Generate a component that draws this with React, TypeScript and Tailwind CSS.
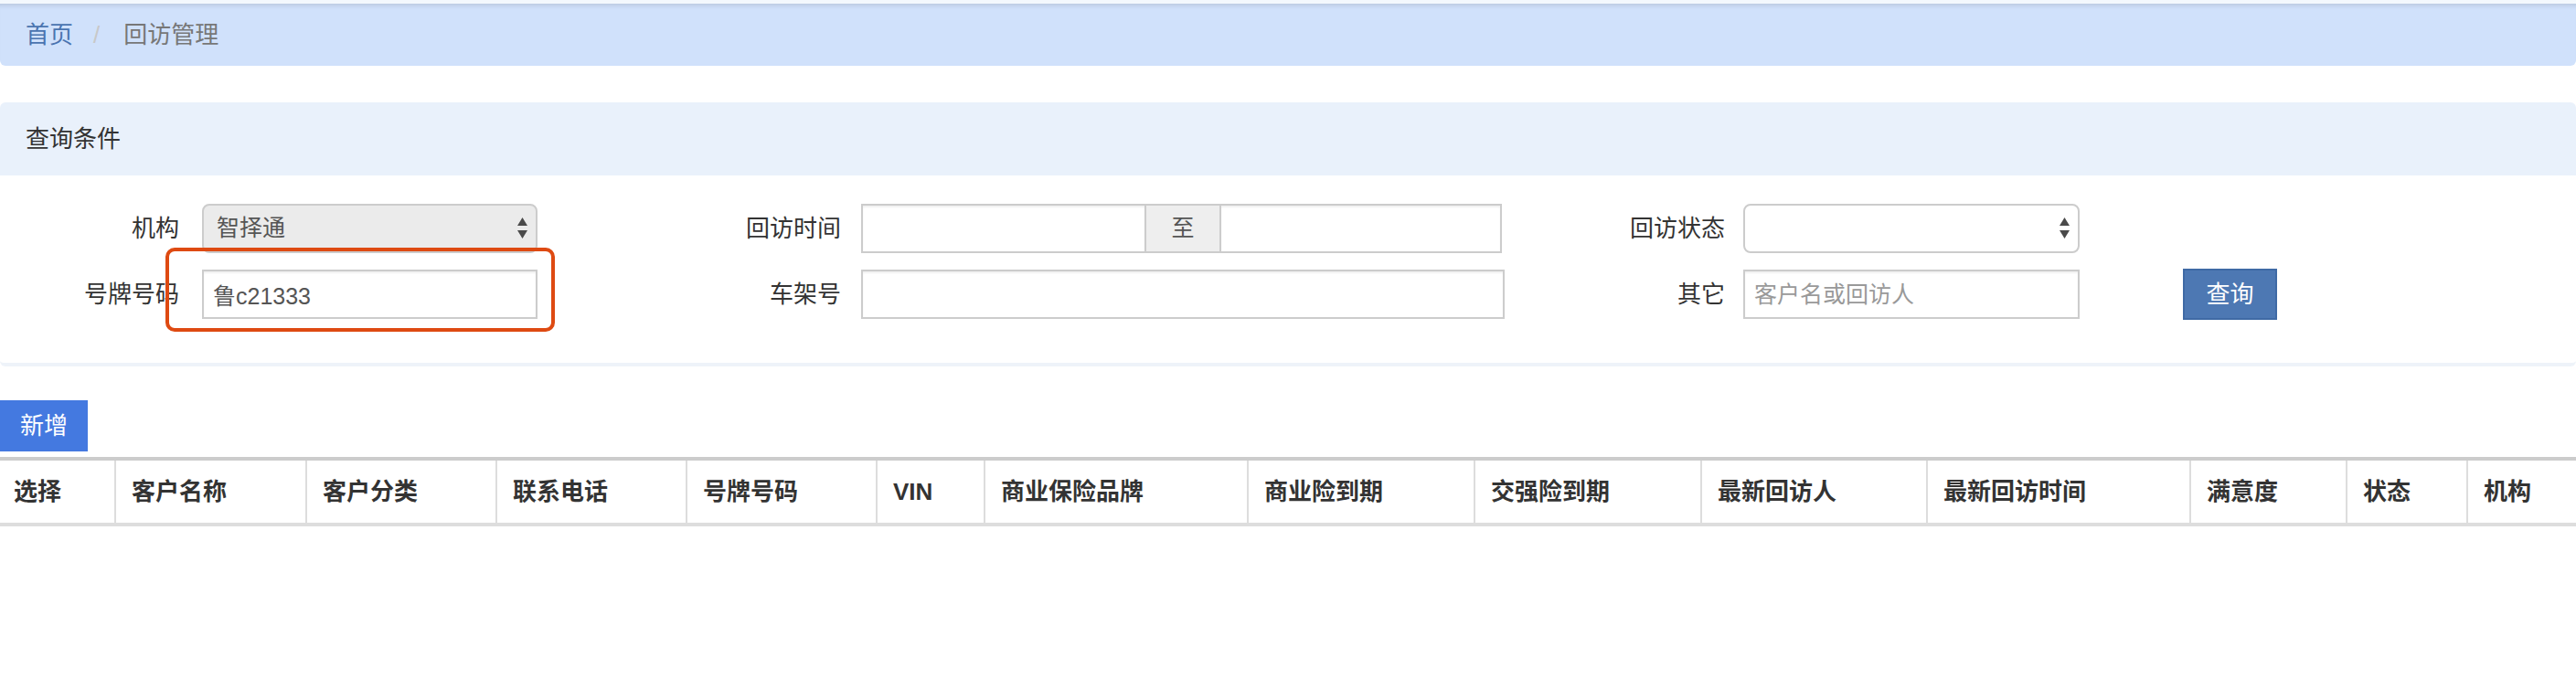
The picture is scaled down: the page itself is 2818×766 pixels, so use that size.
import React from 'react';

const font = { fontFamily: '"Liberation Sans", "Noto Sans CJK SC", sans-serif' };

const columns = [
  { label: '选择', w: 'w-[126px]', pl: 'pl-[15px]' },
  { label: '客户名称', w: 'w-[209px]', pl: 'pl-[17px]' },
  { label: '客户分类', w: 'w-[208px]', pl: 'pl-[17px]' },
  { label: '联系电话', w: 'w-[208px]', pl: 'pl-[17px]' },
  { label: '号牌号码', w: 'w-[208px]', pl: 'pl-[17px]' },
  { label: 'VIN', w: 'w-[118px]', pl: 'pl-[17px]' },
  { label: '商业保险品牌', w: 'w-[288px]', pl: 'pl-[17px]' },
  { label: '商业险到期', w: 'w-[248px]', pl: 'pl-[17px]' },
  { label: '交强险到期', w: 'w-[248px]', pl: 'pl-[17px]' },
  { label: '最新回访人', w: 'w-[247px]', pl: 'pl-[17px]' },
  { label: '最新回访时间', w: 'w-[288px]', pl: 'pl-[17px]' },
  { label: '满意度', w: 'w-[171px]', pl: 'pl-[17px]' },
  { label: '状态', w: 'w-[132px]', pl: 'pl-[17px]' },
  { label: '机构', w: 'w-[119px]', pl: 'pl-[17px]' },
];

const SelectArrows = () => (
  <svg className="absolute right-[11px] top-1/2 -translate-y-1/2" width="11" height="24" viewBox="0 0 11 24">
    <polygon points="5.5,0 11,9 0,9" fill="#4a4a4a" />
    <polygon points="0,14 11,14 5.5,23" fill="#4a4a4a" />
  </svg>
);

const inputCls =
  'h-[54px] border-2 border-[#ccc] bg-white px-[10px] text-[25px] text-[#555] shadow-[inset_0_2px_2px_rgba(0,0,0,0.06)] outline-none placeholder:text-[#999]';

export default function App() {
  return (
    <div className="w-[2818px] h-[766px] bg-white overflow-hidden" style={font}>
      <div className="h-[4px] bg-[#f3f8fd]" />
      {/* breadcrumb */}
      <div className="h-[68px] bg-[#d0e1fb] rounded-b-[6px] flex items-center pl-[28px] text-[26px] shadow-[inset_0_6px_5px_-4px_rgba(0,0,0,0.12)]">
        <span className="text-[#4a74b0]">首页</span>
        <span className="text-[#c8c8c8] ml-[22px] mr-[26px]">/</span>
        <span className="text-[#777]">回访管理</span>
      </div>

      {/* query panel */}
      <div className="mt-[40px] rounded-[6px] border-b-[4px] border-[#eef3f9]">
        <div className="h-[80px] bg-[#e9f1fb] rounded-t-[6px] flex items-center pl-[28px] text-[26px] text-[#333]">
          查询条件
        </div>
        <div className="relative pt-[31px] pb-[48px] flex flex-col gap-[18px] text-[26px] text-[#333]">
          <div className="flex items-center h-[54px]">
            <label className="w-[196px] text-right">机构</label>
            <div className="relative ml-[25px] w-[367px]">
              <select
                defaultValue="1"
                className="appearance-none w-full h-[54px] rounded-[8px] border-2 border-[#ccc] bg-[#ebebeb] pl-[14px] text-[25px] text-[#555] outline-none"
              >
                <option value="1">智择通</option>
              </select>
              <SelectArrows />
            </div>
            <label className="w-[332px] text-right">回访时间</label>
            <div className="ml-[22px] w-[701px] flex">
              <input className={`${inputCls} w-[312px]`} />
              <span className="h-[54px] w-[80px] flex items-center justify-center bg-[#eee] border-y-2 border-[#ccc] text-[25px] text-[#555]">至</span>
              <input className={`${inputCls} w-[309px]`} />
            </div>
            <label className="w-[244px] text-right">回访状态</label>
            <div className="relative ml-[20px] w-[368px]">
              <select className="appearance-none w-full h-[54px] rounded-[8px] border-2 border-[#ccc] bg-white pl-[14px] text-[25px] text-[#555] outline-none">
                <option value=""></option>
              </select>
              <SelectArrows />
            </div>
          </div>
          <div className="flex items-center h-[54px]">
            <label className="w-[196px] text-right">号牌号码</label>
            <input defaultValue="鲁c21333" className={`${inputCls} ml-[25px] w-[367px]`} />
            <label className="w-[332px] text-right">车架号</label>
            <input className={`${inputCls} ml-[22px] w-[704px]`} />
            <label className="w-[241px] text-right">其它</label>
            <input placeholder="客户名或回访人" className={`${inputCls} ml-[20px] w-[368px]`} />
            <button className="ml-[113px] h-[56px] w-[103px] bg-[#4d78b3] border-2 border-[#3f6aa5] text-white text-[26px]">
              查询
            </button>
          </div>
          {/* highlight marker */}
          <div className="absolute left-[181px] top-[79px] w-[426px] h-[92px] rounded-[10px] border-[4px] border-[#de4a12] pointer-events-none" />
        </div>
      </div>

      {/* toolbar */}
      <div className="mt-[37px]">
        <button className="h-[56px] w-[96px] bg-[#4479e0] text-white text-[26px]">新增</button>
      </div>

      {/* table */}
      <table className="mt-[6px] table-fixed border-collapse w-[2818px]">
        <thead>
          <tr className="h-[72px] border-t-[4px] border-t-[#ccc] border-b-[4px] border-b-[#ddd]">
            {columns.map((c, i) => (
              <th
                key={c.label}
                className={`${c.w} ${c.pl} text-left font-bold text-[26px] text-[#333] ${i > 0 ? 'border-l-2 border-l-[#ddd]' : ''}`}
              >
                {c.label}
              </th>
            ))}
          </tr>
        </thead>
        <tbody />
      </table>
    </div>
  );
}
